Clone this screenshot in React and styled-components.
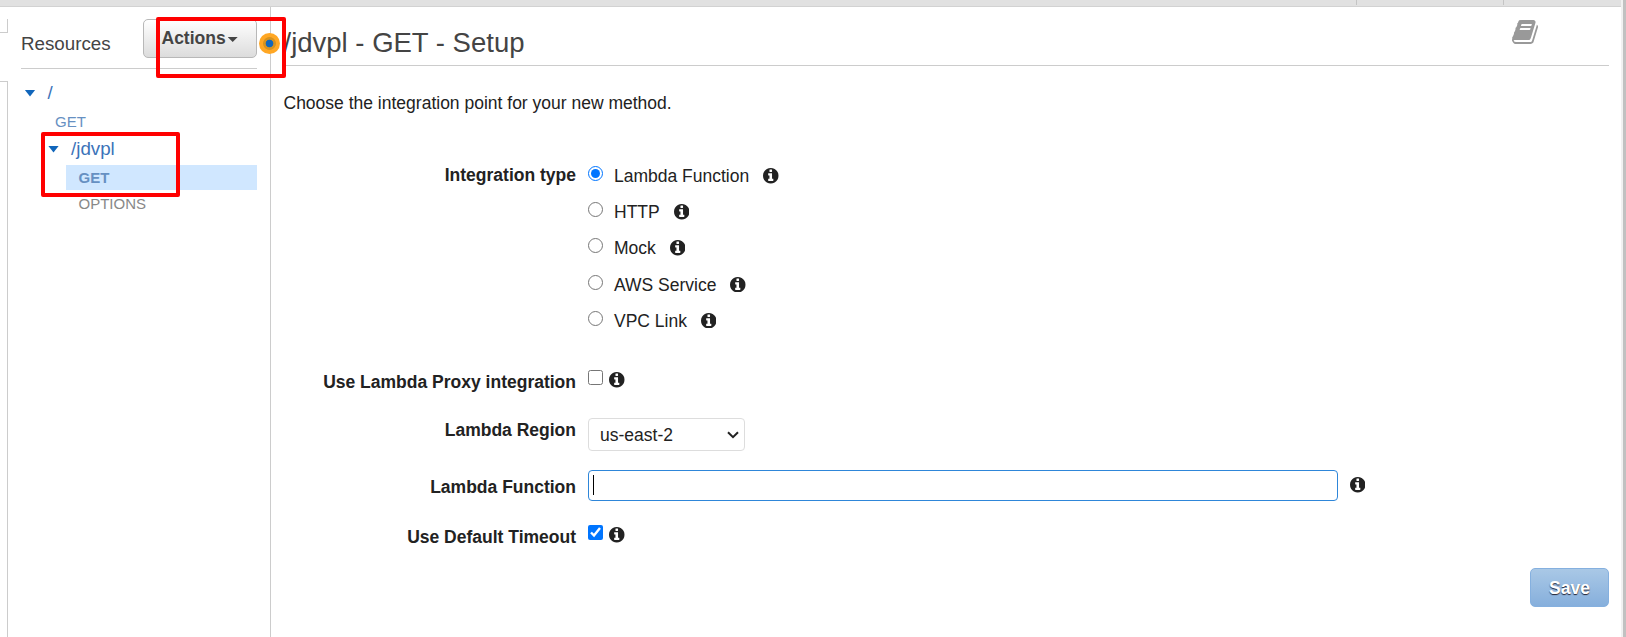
import React from 'react';
import styled, { createGlobalStyle } from 'styled-components';

const GlobalStyle = createGlobalStyle`
  * { box-sizing: border-box; }
  body {
    margin: 0;
    background: #fff;
    color: #222;
    font: 17.5px/20px "Liberation Sans", Arial, sans-serif;
    overflow: hidden;
  }
`;

const Page = styled.div`
  position: relative;
  display: flex;
  width: 1626px;
  height: 637px;
`;

const Shell = styled.div`
  flex: 1;
  display: flex;
  flex-direction: column;
`;

const TopBar = styled.div`
  display: flex;
  justify-content: flex-end;
  height: 7px;
  background: #e1e1e1;
  border-bottom: 1px solid #d2d2d2;
`;

const TopCell = styled.div`
  width: ${(p) => p.$width}px;
  height: 5px;
  border-left: 1px solid #c4c4c4;
`;

const Scrollbar = styled.div`
  width: 5px;
  background: #c1c1c1;
  border-left: 2px solid #f1f1f1;
`;

const Columns = styled.div`
  flex: 1;
  display: flex;
`;

const Rail = styled.div`
  display: flex;
  flex-direction: column;
  justify-content: space-between;
  width: 8px;
  padding-top: 12px;
`;

const RailTab = styled.div`
  height: 14px;
  border: solid #ccc;
  border-width: 0 1px 1px 0;
`;

const RailPanel = styled.div`
  height: 556px;
  border: solid #ccc;
  border-width: 1px 1px 0 0;
`;

const Sidebar = styled.aside`
  width: 263px;
  padding: 12px 13px 0;
  border-right: 1px solid #ccc;
`;

const SidebarHeader = styled.header`
  display: flex;
  justify-content: space-between;
  height: 50px;
  border-bottom: 1px solid #ccc;
`;

const SidebarTitle = styled.h2`
  margin: 14px 0 0;
  color: #444;
  font-size: 18.75px;
  font-weight: 400;
  line-height: 21px;
`;

const ActionsButton = styled.button`
  display: flex;
  align-items: flex-start;
  width: 114px;
  height: 39px;
  padding: 8px 0 0 17.5px;
  border: 1px solid #b8b8b8;
  border-radius: 5px;
  background: linear-gradient(#fff, #dcdcdc);
  color: #444;
  font: bold 17.5px/20px "Liberation Sans", Arial, sans-serif;
`;

const Arrow = styled.i`
  width: ${(p) => p.$width}px;
  height: ${(p) => p.$height}px;
  background: ${(p) => p.$color};
  clip-path: polygon(0 0, 100% 0, 50% 100%);
`;

const ActionsArrow = styled(Arrow)`
  margin: 9px 0 0 2px;
`;

const Tree = styled.div`
  display: flex;
  flex-direction: column;
  gap: 1px;
  padding-top: 10px;
`;

const TreeFolder = styled.div`
  display: flex;
  align-items: center;
  gap: 12px;
  height: 28px;
  margin-bottom: 1px;
  padding-left: ${(p) => p.$indent}px;
  color: #3b73b9;
  font-size: 18.75px;
`;

const TreeMethod = styled.div`
  height: 25px;
  margin-left: ${(p) => p.$indent}px;
  padding-left: 12.5px;
  background: ${(p) => (p.$selected ? '#d0e7ff' : 'transparent')};
  color: ${(p) => (p.$muted ? '#888' : '#6690c2')};
  font-size: 15px;
  font-weight: ${(p) => (p.$selected ? 700 : 400)};
  line-height: 26px;
`;

const Main = styled.main`
  flex: 1;
  display: flex;
  flex-direction: column;
  padding: 0 12px 0 13px;
`;

const MainHeader = styled.header`
  display: flex;
  justify-content: space-between;
  align-items: flex-start;
  height: 59px;
  padding: 11px 69px 0 0;
  border-bottom: 1px solid #ccc;
`;

const Title = styled.h1`
  margin: 9px 0 0 -0.5px;
  color: #444;
  font-size: 27.5px;
  font-weight: 400;
  line-height: 31px;
`;

const Intro = styled.p`
  margin: 27px 0 52px -0.5px;
`;

const Row = styled.div`
  display: flex;
  align-items: flex-start;
  height: ${(p) => p.$height}px;
`;

const Label = styled.label`
  width: 292px;
  margin-right: 12px;
  font-weight: 700;
  text-align: right;
`;

const Options = styled.div`
  display: flex;
  flex-direction: column;
  padding-top: 1px;
`;

const Option = styled.label`
  display: flex;
  align-items: flex-start;
  height: 36.2px;
`;

const OptionText = styled.span`
  margin: 0 13.8px 0 11px;
`;

const CheckGroup = styled.div`
  display: flex;
  align-items: flex-start;
  margin-top: -2px;
`;

const Toggle = styled.input`
  width: 15px;
  height: 15px;
  margin: 0;
  accent-color: #0075ff;
`;

const InfoSvg = styled.svg`
  flex: none;
  width: 15.5px;
  height: 15.5px;
  margin: 2px 0 0 ${(p) => p.$gap || 0}px;
  fill: #222;
`;

const BookSvg = styled.svg`
  width: 28px;
  height: 28px;
  fill: #999;
`;

const SelectBox = styled.div`
  display: grid;
  align-items: center;
  margin-top: -2px;
  > * { grid-area: 1 / 1; }
`;

const Select = styled.select`
  appearance: none;
  width: 157px;
  height: 33px;
  padding: 0 24px 0 11px;
  border: 1px solid #ddd;
  border-radius: 4px;
  background: #fff;
  color: #222;
  font: 17.5px/20px "Liberation Sans", Arial, sans-serif;
`;

const Chevron = styled.svg`
  justify-self: end;
  width: 12px;
  height: 8px;
  margin-right: 6px;
  fill: none;
  stroke: #222;
  stroke-width: 2;
  pointer-events: none;
`;

const FieldGroup = styled.div`
  display: flex;
  align-items: flex-start;
  margin-top: -7px;
`;

const InfoSlot = styled.div`
  display: flex;
  padding: 5px 0 0 11.5px;
`;

const TextField = styled.div`
  width: 750px;
  height: 31px;
  padding: 4px;
  border: 1px solid #2e86d9;
  border-radius: 4px;
`;

const TextCursor = styled.div`
  width: 1px;
  height: 20px;
  background: #000;
`;

const SaveButton = styled.button`
  align-self: flex-end;
  width: 79px;
  height: 39px;
  padding: 0;
  border: 1px solid #85b0df;
  border-radius: 5px;
  background: linear-gradient(#a9c8e6, #86afdc);
  color: #fff;
  font: bold 17.5px/20px "Liberation Sans", Arial, sans-serif;
  text-shadow: 0 1px 1px #223;
`;

const Highlight = styled.div`
  position: absolute;
  left: ${(p) => p.$x}px;
  top: ${(p) => p.$y}px;
  width: ${(p) => p.$w}px;
  height: ${(p) => p.$h}px;
  border: 4px solid #f00;
  border-radius: 2px;
`;

const DragHandle = styled.div`
  position: absolute;
  left: 259px;
  top: 33px;
  width: 21px;
  height: 21px;
  border-radius: 50%;
  background: radial-gradient(circle, #1166bb 3.5px, #d6921f 4.2px, #d6921f 6px, #ffa724 6.8px);
`;

const Info = ({ gap }) => (
  <InfoSvg $gap={gap} viewBox="128 128 1536 1536">
    <path d="M1152 1376v-160q0-14-9-23t-23-9h-96v-512q0-14-9-23t-23-9h-320q-14 0-23 9t-9 23v160q0 14 9 23t23 9h96v320h-96q-14 0-23 9t-9 23v160q0 14 9 23t23 9h448q14 0 23-9t9-23zm-128-896v-160q0-14-9-23t-23-9h-192q-14 0-23 9t-9 23v160q0 14 9 23t23 9h192q14 0 23-9t9-23zm640 416q0 209-103 385.5t-279.5 279.5-385.5 103-385.5-103-279.5-279.5-103-385.5 103-385.5 279.5-279.5 385.5-103 385.5 103 279.5 279.5 103 385.5z" />
  </InfoSvg>
);

const Book = () => (
  <BookSvg viewBox="0 0 1792 1792">
    <path d="M1639 478q40 57 18 129l-275 906q-19 64-76.5 107.5t-122.5 43.5h-923q-77 0-148.5-53.5t-99.5-131.5q-24-67-2-127 0-4 3-27t4-37q1-8-3-21.5t-3-19.5q2-11 8-21t16.5-23.5 16.5-23.5q23-38 45-91.5t30-91.5q3-10 .5-30t-.5-28q3-11 17-28t17-23q21-36 42-92t25-90q1-9-2.5-32t.5-28q4-13 22-30.5t22-22.5q19-26 42.5-84.5t27.5-96.5q1-8-3-25.5t-2-26.5q2-8 9-18t18-23 17-21q8-12 16.5-30.5t15-35 16-36 19.5-32 26.5-23.5 36-11.5 47.5 5.5l-1 3q38-9 51-9h761q74 0 114 56t18 130l-274 906q-36 119-71.5 153.5t-128.5 34.5h-869q-27 0-38 15-11 16-1 43 24 70 144 70h923q29 0 56-15.5t35-41.5l300-987q7-22 5-57 38 15 59 43zm-1064 2q-4 13 2 22.5t20 9.5h608q13 0 25.5-9.5t16.5-22.5l21-64q4-13-2-22.5t-20-9.5h-608q-13 0-25.5 9.5t-16.5 22.5zm-83 256q-4 13 2 22.5t20 9.5h608q13 0 25.5-9.5t16.5-22.5l21-64q4-13-2-22.5t-20-9.5h-608q-13 0-25.5 9.5t-16.5 22.5z" />
  </BookSvg>
);

const integrationTypes = ['Lambda Function', 'HTTP', 'Mock', 'AWS Service', 'VPC Link'];

export default function App() {
  return (
    <Page>
      <GlobalStyle />
      <Shell>
        <TopBar>
          <TopCell $width={147} />
          <TopCell $width={118} />
        </TopBar>
        <Columns>
          <Rail>
            <RailTab />
            <RailPanel />
          </Rail>
          <Sidebar>
            <SidebarHeader>
              <SidebarTitle>Resources</SidebarTitle>
              <ActionsButton>
                Actions
                <ActionsArrow $width={10} $height={5} $color="#444" />
              </ActionsButton>
            </SidebarHeader>
            <Tree>
              <TreeFolder $indent={3.5}>
                <Arrow $width={11} $height={7} $color="#1166bb" />/
              </TreeFolder>
              <TreeMethod $indent={21.5}>GET</TreeMethod>
              <TreeFolder $indent={27}>
                <Arrow $width={11} $height={7} $color="#1166bb" />/jdvpl
              </TreeFolder>
              <TreeMethod $indent={45} $selected>GET</TreeMethod>
              <TreeMethod $indent={45} $muted>OPTIONS</TreeMethod>
            </Tree>
          </Sidebar>
          <Main>
            <MainHeader>
              <Title>/jdvpl - GET - Setup</Title>
              <Book />
            </MainHeader>
            <Intro>Choose the integration point for your new method.</Intro>
            <Row $height={207}>
              <Label>Integration type</Label>
              <Options>
                {integrationTypes.map((name, i) => (
                  <Option key={name}>
                    <Toggle type="radio" name="type" defaultChecked={i === 0} />
                    <OptionText>{name}</OptionText>
                    <Info />
                  </Option>
                ))}
              </Options>
            </Row>
            <Row $height={48}>
              <Label>Use Lambda Proxy integration</Label>
              <CheckGroup>
                <Toggle type="checkbox" />
                <Info gap={6} />
              </CheckGroup>
            </Row>
            <Row $height={57}>
              <Label>Lambda Region</Label>
              <SelectBox>
                <Select defaultValue="us-east-2">
                  <option>us-east-2</option>
                </Select>
                <Chevron viewBox="0 0 12 8">
                  <path d="M1 1.2 6 6.2 11 1.2" />
                </Chevron>
              </SelectBox>
            </Row>
            <Row $height={50}>
              <Label>Lambda Function</Label>
              <FieldGroup>
                <TextField>
                  <TextCursor />
                </TextField>
                <InfoSlot>
                  <Info />
                </InfoSlot>
              </FieldGroup>
            </Row>
            <Row $height={41}>
              <Label>Use Default Timeout</Label>
              <CheckGroup>
                <Toggle type="checkbox" defaultChecked />
                <Info gap={6} />
              </CheckGroup>
            </Row>
            <SaveButton>Save</SaveButton>
          </Main>
        </Columns>
      </Shell>
      <Scrollbar />
      <DragHandle />
      <Highlight $x={156} $y={17} $w={130} $h={61} />
      <Highlight $x={41} $y={131.5} $w={138.5} $h={65} />
    </Page>
  );
}
